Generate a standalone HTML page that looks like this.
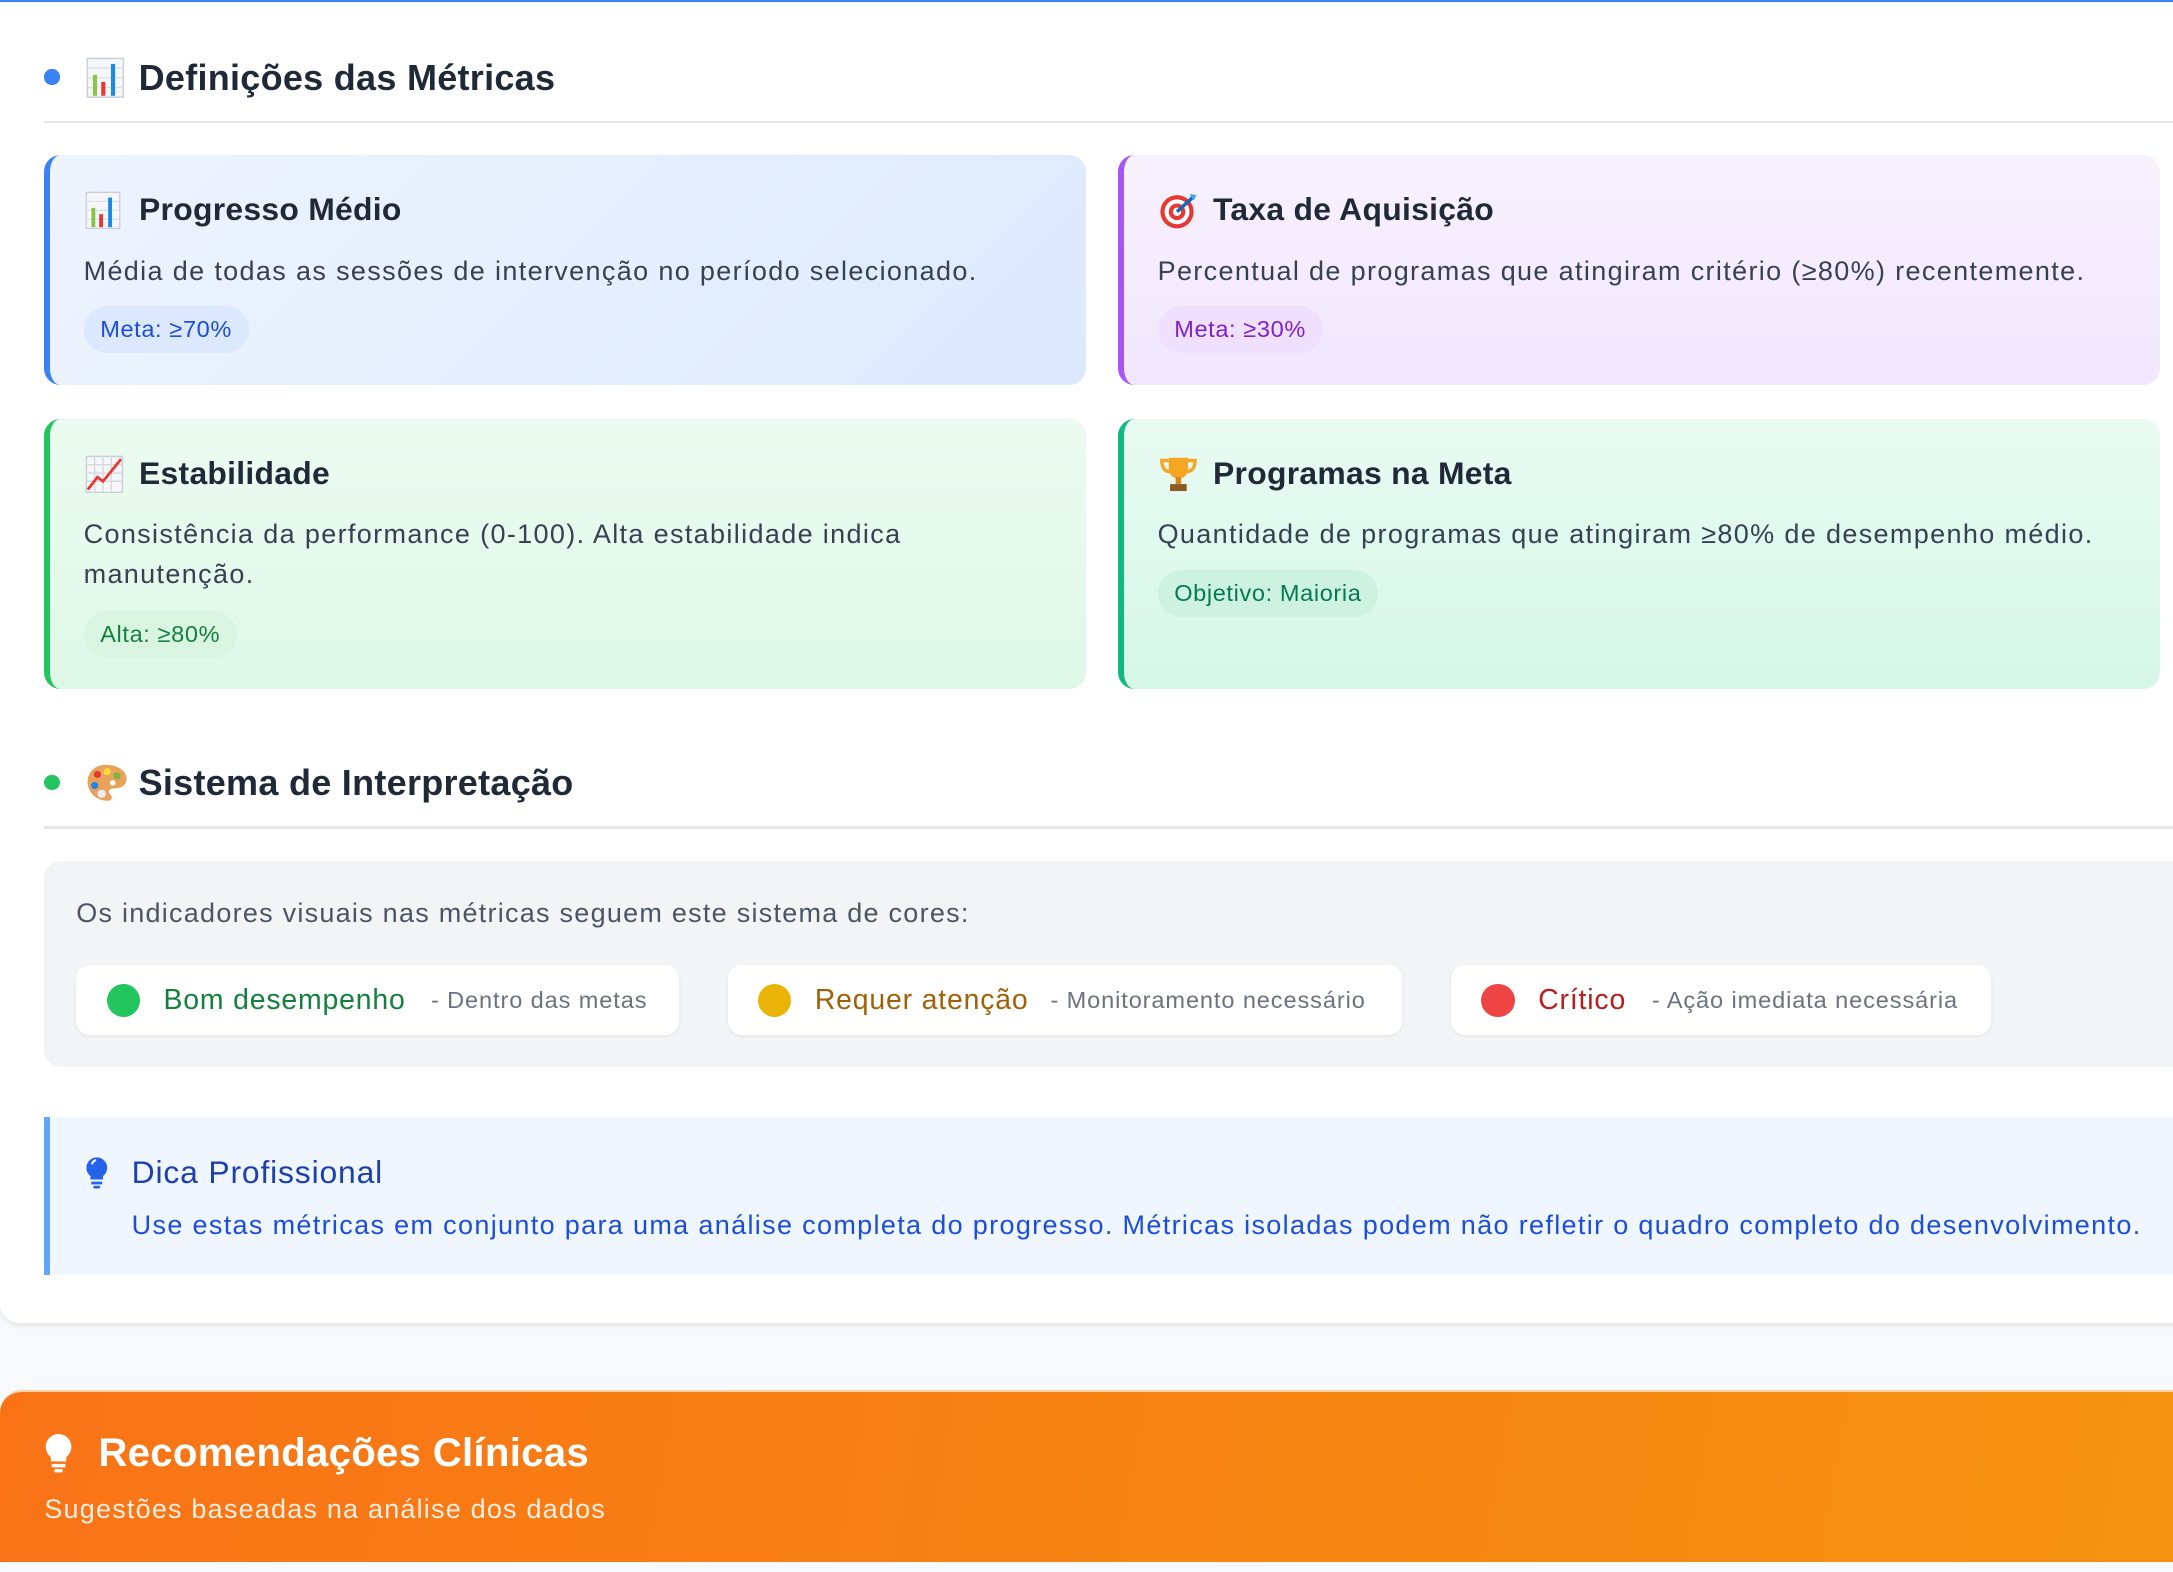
<!DOCTYPE html>
<html><head><meta charset="utf-8">
<style>
*{box-sizing:border-box;margin:0;padding:0}
html,body{width:2173px;height:1572px;overflow:hidden;background:#f8f9fb}
#w{zoom:1.3858;width:1568px;height:1135px;position:relative;font-family:"Liberation Sans",sans-serif;color:#1f2937}
.a{position:absolute;white-space:nowrap}
.panel{position:absolute;left:0;top:0;width:1600px;height:955px;background:#fff;border-top:2px solid #3b82f6;border-radius:0 0 0 14px;box-shadow:0 2px 3px rgba(0,0,0,.08)}
.dot{position:absolute;width:11px;height:11px;border-radius:50%}
.h2{font-size:26px;font-weight:bold;color:#1f2937;letter-spacing:.2px}
.hr{position:absolute;left:32px;width:1560px;height:2px;background:#e5e7eb}
.card{position:absolute;width:752px;border-radius:12px;border-left:5px solid}
.card .t{position:absolute;left:64px;top:26px;font-size:23px;font-weight:bold;color:#1f2937;letter-spacing:.2px}
.card .i{position:absolute;left:25px;top:26px}
.card .d{position:absolute;left:24px;top:69px;font-size:19.5px;color:#374151;line-height:29px;letter-spacing:.97px;width:720px;white-space:normal}
.badge{position:absolute;left:24px;height:34px;line-height:34px;padding:0 12px;border-radius:17px;font-size:17px;letter-spacing:.45px}
.pill{position:absolute;top:696px;height:51px;background:#fff;border-radius:10px;box-shadow:0 1px 3px rgba(0,0,0,.06)}
.pill .c{position:absolute;left:22px;top:14px;width:24px;height:24px;border-radius:50%}
.pill .l{position:absolute;left:63px;top:14px;font-size:20.5px;letter-spacing:.6px}
.pill .s{position:absolute;top:16px;font-size:17px;color:#6b7280;letter-spacing:.65px}
</style></head><body><div id="w">
<div class="panel"></div>

<div class="dot" style="left:32px;top:50px;background:#3b82f6"></div>
<svg class="a" style="left:62px;top:41px" width="28" height="30" viewBox="0 0 28 30"><rect x="1" y="1" width="26" height="28" fill="#f4f6f8" stroke="#c9ced4"/><path d="M1 8h26M1 15h26M1 22h26" stroke="#dde1e5"/><rect x="5" y="13" width="3" height="15" fill="#8bc34a"/><rect x="11" y="18" width="3" height="10" fill="#e53935"/><rect x="18" y="5" width="3" height="23" fill="#1e88e5"/></svg>
<div class="a h2" style="left:100px;top:41px">Definições das Métricas</div>
<div class="hr" style="top:87px"></div>

<div class="card" style="left:32px;top:112px;height:166px;border-color:#3b82f6;background:linear-gradient(135deg,#eef4fe,#dce9fc)">
 <svg class="i" width="26" height="28" viewBox="0 0 28 30"><rect x="1" y="1" width="26" height="28" fill="#f4f6f8" stroke="#c9ced4"/><path d="M1 8h26M1 15h26M1 22h26" stroke="#dde1e5"/><rect x="5" y="13" width="3" height="15" fill="#8bc34a"/><rect x="11" y="18" width="3" height="10" fill="#e53935"/><rect x="18" y="5" width="3" height="23" fill="#1e88e5"/></svg>
 <div class="t">Progresso Médio</div>
 <div class="d">Média de todas as sessões de intervenção no período selecionado.</div>
 <div class="badge" style="top:109px;background:#dbe8fd;color:#1d4ed8">Meta: ≥70%</div>
</div>

<div class="card" style="left:807px;top:112px;height:166px;border-color:#a855f7;background:linear-gradient(180deg,#f8f2fe,#f1e6fd)">
 <svg class="i" width="28" height="28" viewBox="0 0 28 28"><circle cx="13" cy="15" r="12" fill="#e53935"/><circle cx="13" cy="15" r="9" fill="#fff"/><circle cx="13" cy="15" r="6" fill="#e53935"/><circle cx="13" cy="15" r="3" fill="#fff"/><path d="M13 15L25 4" stroke="#1565c0" stroke-width="2.5"/><path d="M22 2l5 1-2 4z" fill="#42a5f5"/></svg>
 <div class="t">Taxa de Aquisição</div>
 <div class="d">Percentual de programas que atingiram critério (≥80%) recentemente.</div>
 <div class="badge" style="top:109px;background:#efe0fd;color:#7e22ce">Meta: ≥30%</div>
</div>

<div class="card" style="left:32px;top:302px;height:195px;border-color:#22c55e;background:linear-gradient(180deg,#ecfbf1,#def8e8)">
 <svg class="i" width="28" height="28" viewBox="0 0 28 28"><rect x="1" y="1" width="26" height="26" fill="#f4f6f8" stroke="#c9ced4"/><path d="M1 7h26M1 13h26M1 19h26M7 1v26M13 1v26M19 1v26" stroke="#d5d9de"/><path d="M2 25l7-9 4 3 13-16" stroke="#e53935" stroke-width="2" fill="none"/></svg>
 <div class="t">Estabilidade</div>
 <div class="d" style="width:640px">Consistência da performance (0-100). Alta estabilidade indica manutenção.</div>
 <div class="badge" style="top:139px;background:#d9f5e2;color:#15803d">Alta: ≥80%</div>
</div>

<div class="card" style="left:807px;top:302px;height:195px;border-color:#10b981;background:linear-gradient(180deg,#e9fbf3,#d5f7e7)">
 <svg class="i" width="28" height="28" viewBox="0 0 28 28"><path d="M7 2h14v8a7 7 0 0 1-14 0z" fill="#f5a623"/><path d="M7 4H2c0 6 3 8 6 8M21 4h5c0 6-3 8-6 8" stroke="#f5a623" stroke-width="2.5" fill="none"/><rect x="12" y="16" width="4" height="5" fill="#d48a1a"/><rect x="8" y="21" width="12" height="5" fill="#8d5a1e"/></svg>
 <div class="t">Programas na Meta</div>
 <div class="d">Quantidade de programas que atingiram ≥80% de desempenho médio.</div>
 <div class="badge" style="top:109px;background:#cdf3e0;color:#047857">Objetivo: Maioria</div>
</div>

<div class="dot" style="left:32px;top:559px;background:#22c55e"></div>
<svg class="a" style="left:61px;top:550px" width="31" height="30" viewBox="0 0 31 30"><path d="M15 2C6 2 1 9 2 16c1 8 8 12 14 12 4 0 4-3 2-5-2-2 0-4 3-4 5 0 9-2 9-7C30 6 23 2 15 2z" fill="#e8a25c"/><circle cx="9" cy="9" r="2.6" fill="#e53935"/><circle cx="16" cy="7" r="2.6" fill="#fdd835"/><circle cx="23" cy="10" r="2.6" fill="#7cb342"/><circle cx="7" cy="17" r="2.6" fill="#1e88e5"/><circle cx="12" cy="23" r="3" fill="#eee"/><circle cx="20" cy="15" r="2" fill="#fff"/></svg>
<div class="a h2" style="left:100px;top:550px">Sistema de Interpretação</div>
<div class="hr" style="top:596px"></div>

<div class="a" style="left:32px;top:621px;width:1560px;height:149px;background:#f3f4f6;border-radius:12px"></div>
<div class="a" style="left:55px;top:648px;font-size:19.5px;color:#4b5563;letter-spacing:.9px">Os indicadores visuais nas métricas seguem este sistema de cores:</div>

<div class="pill" style="left:55px;width:435px"><div class="c" style="background:#22c55e"></div><div class="l" style="color:#15803d">Bom desempenho</div><div class="s" style="left:256px">- Dentro das metas</div></div>
<div class="pill" style="left:525px;width:487px"><div class="c" style="background:#eab308"></div><div class="l" style="color:#a16207">Requer atenção</div><div class="s" style="left:233px">- Monitoramento necessário</div></div>
<div class="pill" style="left:1047px;width:390px"><div class="c" style="background:#ef4444"></div><div class="l" style="color:#b91c1c">Crítico</div><div class="s" style="left:145px">- Ação imediata necessária</div></div>

<div class="a" style="left:32px;top:806px;width:1560px;height:114px;background:#eff6ff;border-left:5px solid #60a5fa"></div>
<svg class="a" style="left:61px;top:834px" width="17" height="24" viewBox="0 0 17 24"><path d="M8.5 1A7.5 7.5 0 0 0 4 14.5V17h9v-2.5A7.5 7.5 0 0 0 8.5 1z" fill="#2563eb"/><rect x="4.5" y="18.5" width="8" height="2" fill="#2563eb"/><rect x="6" y="21.5" width="5" height="2" rx="1" fill="#2563eb"/><path d="M5 6a4 4 0 0 1 3-3" stroke="#fff" stroke-width="1.5" fill="none"/></svg>
<div class="a" style="left:95px;top:833px;font-size:23px;color:#1e40af;letter-spacing:.6px">Dica Profissional</div>
<div class="a" style="left:95px;top:873px;font-size:19.5px;color:#1d4ed8;letter-spacing:.96px">Use estas métricas em conjunto para uma análise completa do progresso. Métricas isoladas podem não refletir o quadro completo do desenvolvimento.</div>

<div class="a" style="left:0;top:1003px;width:1600px;height:124px;border-radius:16px 0 0 0;background:linear-gradient(100deg,#f97316,#f59310);border-top:2px solid #f6d3a8"></div>
<svg class="a" style="left:32px;top:1033px" width="21" height="30" viewBox="0 0 17 24"><path d="M8.5 1A7.5 7.5 0 0 0 4 14.5V17h9v-2.5A7.5 7.5 0 0 0 8.5 1z" fill="#fff"/><rect x="4.5" y="18.5" width="8" height="2" fill="#fff"/><rect x="6" y="21.5" width="5" height="2" rx="1" fill="#fff"/></svg>
<div class="a" style="left:71px;top:1032px;font-size:29px;font-weight:bold;color:#fff;letter-spacing:.2px">Recomendações Clínicas</div>
<div class="a" style="left:32px;top:1078px;font-size:19.5px;color:rgba(255,255,255,.88);letter-spacing:.86px">Sugestões baseadas na análise dos dados</div>
</div></body></html>
